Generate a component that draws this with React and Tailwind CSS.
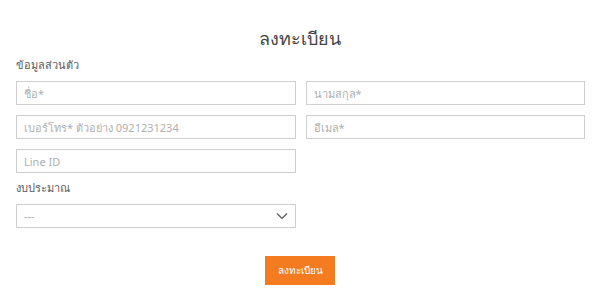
import React from "react";

const fontStack = { fontFamily: '"Noto Sans", "DejaVu Sans", sans-serif' };

const Field = ({ placeholder }) => (
  <input
    type="text"
    placeholder={placeholder}
    className="w-full h-[24px] border border-[#cfcfcf] bg-white px-[7px] text-[11px] text-[#555] placeholder:text-[#b0b0b0] outline-none"
  />
);

export default function App() {
  return (
    <div className="w-[600px] h-[299px] bg-white overflow-hidden" style={fontStack}>
      <div className="px-[16px] pt-[26px]">
        <h1 className="text-center text-[18px] leading-[24px] text-[#444]">ลงทะเบียน</h1>

        <p className="mt-[8px] text-[11px] leading-[14px] text-[#5a5a5a]">ข้อมูลส่วนตัว</p>

        <div className="mt-[9px] grid grid-cols-2 gap-x-[10px] gap-y-[10px] w-[569px]">
          <Field placeholder="ชื่อ*" />
          <Field placeholder="นามสกุล*" />
          <Field placeholder="เบอร์โทร* ตัวอย่าง 0921231234" />
          <Field placeholder="อีเมล*" />
          <Field placeholder="Line ID" />
        </div>

        <p className="mt-[8px] text-[11px] leading-[14px] text-[#5a5a5a]">งบประมาณ</p>

        <div className="mt-[9px] w-[280px]">
          <div className="h-[24px] border border-[#cfcfcf] flex items-center justify-between px-[7px]">
            <span className="text-[11px] text-[#b0b0b0]">---</span>
            <svg width="12" height="8" viewBox="0 0 12 8" fill="none" stroke="#555" strokeWidth="1.2">
              <path d="M1 1.5l5 5 5-5" />
            </svg>
          </div>
        </div>

        <div className="mt-[28px] flex justify-center">
          <button className="w-[70px] h-[29px] bg-[#f47b20] text-white text-[10px]">ลงทะเบียน</button>
        </div>
      </div>
    </div>
  );
}
